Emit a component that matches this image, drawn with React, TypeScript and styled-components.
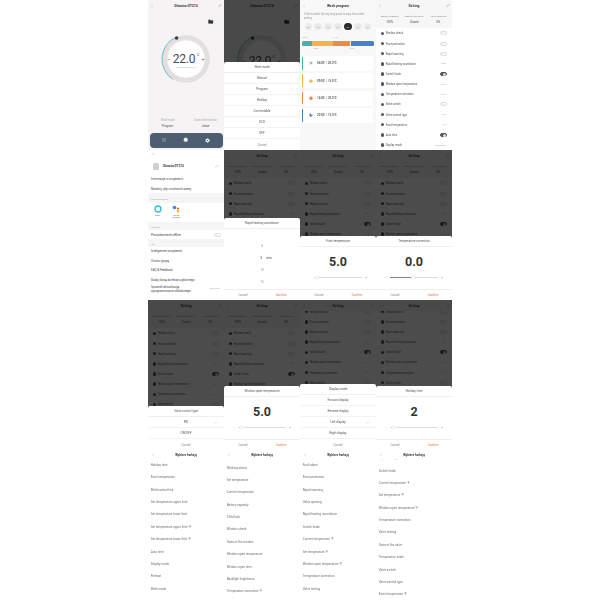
import React from 'react';
import styled, { createGlobalStyle } from 'styled-components';
import { ChevronLeft, ChevronRight, Pencil, Check, LayoutGrid, Clock, Moon, Sun, Coffee, Home, Folder } from 'lucide-react';

const Global = createGlobalStyle`
    * { box-sizing: border-box; }
    html, body { margin: 0; padding: 0; background: #fff; }
    body { font-family: "Roboto", "Liberation Sans", sans-serif; color: #3a3a3a; }
`;

const Board = styled.div`
    width: 304px;
    margin-left: 148px;
    display: grid;
    grid-template-columns: repeat(4, 76px);
    grid-auto-rows: 150px;
    filter: blur(0.5px);
`;

const Phone = styled.div<{ $bg?: string }>`
    width: 76px;
    height: 150px;
    overflow: hidden;
    display: flex;
    flex-direction: column;
    background: ${(p) => p.$bg || '#fff'};
    font-size: 3.2px;
`;

const Layer = styled.div`
    position: relative;
    width: 76px;
    height: 150px;
    overflow: hidden;
`;

const Header = styled.div`
    position: relative;
    z-index: 1;
    height: 11px;
    flex: none;
    display: grid;
    grid-template-columns: 4px 1fr 4px;
    align-items: center;
    text-align: center;
    padding: 0 2px;
    font-size: 3.4px;
    font-weight: 700;
    background: inherit;
`;

const Footer = styled.div`
    display: grid;
    grid-template-columns: 1fr 1fr;
    height: 11px;
    flex: none;
    align-items: center;
    text-align: center;
    border-top: 0.5px solid #eee;
    color: #888;
    font-size: 3px;
`;

const Confirm = styled.span`
    color: #e8693a;
`;

const Scrim = styled.div`
    position: absolute;
    z-index: 2;
    inset: 0;
    background: rgba(0, 0, 0, 0.7);
`;

const Sheet = styled.div<{ $h: number }>`
    position: absolute;
    z-index: 3;
    left: 0;
    right: 0;
    bottom: 0;
    height: ${(p) => p.$h}px;
    background: #fff;
    display: flex;
    flex-direction: column;
    border-radius: 2px 2px 0 0;
`;

const SheetTitle = styled.div`
    height: 11px;
    flex: none;
    display: flex;
    align-items: center;
    justify-content: center;
    font-size: 3px;
    color: #555;
    border-bottom: 0.5px solid #f0f0f0;
`;

const ChoiceRow = styled.div<{ $muted?: boolean }>`
    position: relative;
    height: 11px;
    flex: none;
    display: flex;
    align-items: center;
    justify-content: center;
    font-size: 3px;
    color: ${(p) => (p.$muted ? '#888' : '#555')};
    border-bottom: ${(p) => (p.$muted ? '0' : '0.5px solid #f3f3f3')};
`;

const Tick = styled.span`
    position: absolute;
    right: 6px;
    top: 3.5px;
    color: #e6a15a;
    line-height: 0;
`;

const SliderBody = styled.div`
    flex: 1;
    display: flex;
    flex-direction: column;
    align-items: center;
    justify-content: center;
    gap: 7.5px;
`;

const Big = styled.div`
    font-size: 12.5px;
    font-weight: 700;
    color: #333;
    line-height: 12px;
`;

const Track = styled.div`
    width: 58px;
    display: flex;
    align-items: center;
    gap: 3px;
    color: #999;
    font-size: 3px;
    line-height: 4px;
`;

const TrackLine = styled.div`
    position: relative;
    flex: 1;
    height: 0.7px;
    background: #ddd;
`;

const TrackFill = styled.div<{ $w: number }>`
    position: absolute;
    left: 0;
    top: -0.3px;
    height: 1.3px;
    width: ${(p) => p.$w}px;
    background: #5a8fc8;
`;

const Knob = styled.div<{ $x: number }>`
    position: absolute;
    left: ${(p) => p.$x}px;
    top: -1px;
    width: 3px;
    height: 3px;
    border-radius: 50%;
    background: #fff;
    box-shadow: 0 0 1px #aaa;
`;

const WheelBody = styled.div`
    flex: 1;
    display: flex;
    flex-direction: column;
    align-items: center;
    gap: 6px;
    font-size: 3px;
    color: #888;
    padding-top: 14px;
    overflow: hidden;
`;

const WheelRow = styled.div<{ $active?: boolean }>`
    height: 6px;
    flex: none;
    width: 100%;
    display: flex;
    align-items: center;
    justify-content: center;
    gap: 4.5px;
    padding-left: ${(p) => (p.$active ? 8 : 0)}px;
    color: ${(p) => (p.$active ? '#333' : '#999')};
`;

/* home screen */
const FolderSpot = styled.div`
    align-self: flex-end;
    margin: 8px 10.5px 0 0;
    height: 6px;
    color: #333;
    line-height: 0;
`;

const Dial = styled.div`
    margin: 9.3px 0 0 13px;
    width: 50px;
    height: 50px;
    position: relative;
    flex: none;
`;

const DialText = styled.div`
    position: absolute;
    inset: 0;
    padding-top: 2.5px;
    display: flex;
    flex-direction: column;
    align-items: center;
    justify-content: center;
`;

const DialValue = styled.div`
    display: flex;
    align-items: center;
    gap: 1px;
    font-size: 12px;
    font-weight: 400;
    letter-spacing: -0.2px;
    color: #3f4a55;
    line-height: 12px;
`;

const DialSign = styled.span`
    font-family: "Liberation Sans", sans-serif;
    font-size: 6px;
    color: #666;
    margin: 0 1px;
`;

const Degree = styled.span`
    font-size: 3.4px;
    align-self: flex-start;
    line-height: 5px;
`;

const DialNote = styled.div`
    font-size: 1.7px;
    color: #aaa;
    margin-top: 1px;
`;

const StateLine = styled.div`
    margin-top: auto;
    display: grid;
    grid-template-columns: 39px 1fr;
    text-align: center;
    font-size: 2.6px;
    color: #aaa;
`;

const StateValue = styled.div`
    margin-top: 2.2px;
    font-size: 3px;
    color: #555;
`;

const Dock = styled.div`
    margin: 5px 1.5px 2.3px;
    height: 15px;
    flex: none;
    border-radius: 4px;
    background: #4d5e72;
    display: flex;
    justify-content: space-around;
    align-items: center;
    color: #fff;
    padding: 0 4px;
`;

/* week program */
const Hint = styled.div`
    font-size: 2.6px;
    color: #999;
    line-height: 4px;
    padding: 1.7px 4px 0;
    white-space: nowrap;
`;

const DayLine = styled.div`
    display: flex;
    justify-content: space-between;
    padding: 2.3px 4.5px 0;
`;

const Day = styled.div<{ $on?: boolean }>`
    width: 7.5px;
    height: 7.5px;
    border-radius: 50%;
    background: ${(p) => (p.$on ? '#2a2a2a' : '#eceaea')};
    color: ${(p) => (p.$on ? '#fff' : '#aaa')};
    font-size: 1.9px;
    display: flex;
    align-items: center;
    justify-content: center;
`;

const BarNotes = styled.div<{ $top: number; $left: number; $gap: number }>`
    display: flex;
    gap: ${(p) => p.$gap}px;
    padding-left: ${(p) => p.$left}px;
    margin-top: ${(p) => p.$top}px;
    height: 3px;
    flex: none;
    font-size: 1.9px;
    line-height: 3px;
    color: #aaa;
`;

const DayBar = styled.div`
    margin: 1.2px 2.5px 0 2px;
    height: 5.5px;
    flex: none;
    display: flex;
    border-radius: 1.5px;
    overflow: hidden;
    gap: 0.4px;
`;

const DaySlot = styled.div<{ $grow: number; $c: string }>`
    flex: ${(p) => p.$grow};
    background: ${(p) => p.$c};
`;

const SlotList = styled.div`
    margin-top: 5.6px;
    display: flex;
    flex-direction: column;
    gap: 2.3px;
`;

const SlotCard = styled.div`
    height: 15px;
    flex: none;
    display: flex;
    align-items: center;
    background: #fff;
    margin-right: 3px;
    padding: 0 3px 0 2px;
    font-size: 2.9px;
    font-weight: 500;
    color: #444;
    white-space: pre;
`;

const SlotMark = styled.span<{ $c: string }>`
    width: 1px;
    height: 12.7px;
    background: ${(p) => p.$c};
`;

const SlotIcon = styled.span`
    margin: 0 3.7px 0 6.3px;
    line-height: 0;
`;

const SlotArrow = styled.span`
    margin-left: auto;
    line-height: 0;
`;

/* setting screen */
const Stats = styled.div`
    display: grid;
    grid-template-columns: repeat(3, 1fr);
    text-align: center;
    padding: 4.5px 1.5px 0;
    font-size: 2.5px;
    line-height: 2.9px;
    color: #888;
    height: 17.4px;
    flex: none;
    white-space: nowrap;
`;

const StatValue = styled.div`
    margin-top: 2.8px;
    font-size: 2.8px;
    color: #555;
`;

const SettingList = styled.div<{ $shift: number }>`
    display: flex;
    flex-direction: column;
    background: #fff;
    flex: 1;
    margin-top: ${(p) => p.$shift}px;
`;

const SettingRow = styled.div`
    height: 10.15px;
    flex: none;
    display: flex;
    align-items: center;
    padding: 0 5px 0 4.6px;
    font-size: 2.7px;
    color: #555;
`;

const Bullet = styled.span`
    width: 3.4px;
    height: 3.4px;
    margin-right: 1.7px;
    border-radius: 50%;
    background: #4c5763;
`;

const SettingValue = styled.span`
    margin-left: auto;
    font-size: 2.1px;
    color: #aaa;
`;

const Toggle = styled.span<{ $on?: boolean }>`
    margin-left: auto;
    width: 7.4px;
    height: 4px;
    border-radius: 2px;
    border: 0.5px solid ${(p) => (p.$on ? '#4c5763' : '#ddd')};
    background: ${(p) => (p.$on ? '#4c5763' : '#fff')};
    display: flex;
    justify-content: ${(p) => (p.$on ? 'flex-end' : 'flex-start')};
    &::after {
        content: '';
        width: 3px;
        height: 3px;
        border-radius: 50%;
        background: ${(p) => (p.$on ? '#ddd' : '#eee')};
    }
`;

/* device menu */
const TopBack = styled.div`
    height: 8px;
    flex: none;
    padding-left: 3px;
    display: flex;
    align-items: center;
`;

const DeviceHead = styled.div`
    height: 16.7px;
    display: flex;
    align-items: center;
    padding: 0 6px 0 5px;
    gap: 4px;
    font-size: 3px;
    font-weight: 700;
    flex: none;
`;

const Thumb = styled.span`
    width: 6px;
    height: 7px;
    background: #cfcfcf;
    border-radius: 2px 2px 1px 1px;
`;

const HeadEdit = styled.span`
    margin-left: auto;
    line-height: 0;
`;

const MenuRow = styled.div<{ $h?: number }>`
    height: ${(p) => p.$h || 9.35}px;
    flex: none;
    display: flex;
    align-items: center;
    justify-content: space-between;
    padding: 0 3px;
    font-size: 3px;
    color: #444;
    line-height: 4.2px;
`;

const MenuTag = styled.span`
    font-size: 2.1px;
    color: #aaa;
`;

const Band = styled.div<{ $h: number }>`
    height: ${(p) => p.$h}px;
    flex: none;
    background: #f5f5f5;
    color: #aaa;
    font-size: 1.9px;
    display: flex;
    align-items: center;
    padding: 1.5px 3px 0;
`;

const Assistants = styled.div`
    height: 19px;
    flex: none;
    display: flex;
    gap: 8.7px;
    padding: 1.5px 0 0 4.5px;
`;

const Assistant = styled.div`
    width: 10px;
    display: flex;
    flex-direction: column;
    align-items: center;
    font-size: 1.9px;
    color: #666;
    text-align: center;
    line-height: 2.4px;
    gap: 1.5px;
`;

/* feature list */
const FeatureRow = styled.div`
    height: 12.37px;
    flex: none;
    display: flex;
    align-items: center;
    justify-content: space-between;
    padding: 0 4px 0 2.7px;
    font-size: 3.05px;
    color: #707070;
`;

const FeatureList = styled.div<{ $shift: number }>`
    margin-top: ${(p) => p.$shift}px;
    display: flex;
    flex-direction: column;
`;

const ListHead = styled(Header)`
    height: 9px;
    font-size: 3px;
    padding: 0 3px;
`;

const Chevron = () => <ChevronRight size={3} strokeWidth={1.4} color="#bbb" />;

const Back = () => <ChevronLeft size={4} strokeWidth={1.6} color="#777" />;

const PROGRAM_SLOTS = [
    { c: '#3fb5ac', t: '06:00  |  20.0°C', icon: <Sun size={4} color="#3fb5ac" fill="#3fb5ac" /> },
    { c: '#f2b644', t: '09:00  |  15.0°C', icon: <Coffee size={4} color="#f2b644" fill="#f2b644" /> },
    { c: '#ef8a45', t: '14:00  |  22.0°C', icon: <Home size={4} color="#ef8a45" fill="#ef8a45" /> },
    { c: '#4a7fc0', t: '22:00  |  15.0°C', icon: <Moon size={4} color="#4a7fc0" fill="#4a7fc0" /> },
];

const SETTINGS: { name: string; value?: string; toggle?: 'on' | 'off' }[] = [
    { name: 'Window check', toggle: 'off' },
    { name: 'Frost protection', toggle: 'off' },
    { name: 'Rapid warming', toggle: 'off' },
    { name: 'Rapid heating countdown', value: '5min  ›' },
    { name: 'Switch Scale', toggle: 'on' },
    { name: 'Window open temperature', value: '5.0°C  ›' },
    { name: 'Temperature correction', value: '0.0°C  ›' },
    { name: 'Valve switch', toggle: 'off' },
    { name: 'Valve control type', value: 'PID  ›' },
    { name: 'Frost temperature', value: '5.0  ›' },
    { name: 'Auto time', toggle: 'on' },
    { name: 'Display mode', value: 'Left display  ›' },
];

const SettingScreen: React.FC<{ shift?: number; rows?: number }> = ({ shift = 0, rows = 12 }) => (
    <Phone $bg="#f6f6f6">
        <Header>
            <Back />
            Setting
            <Pencil size={3.5} strokeWidth={1.6} color="#777" />
        </Header>
        {shift === 0 && (
            <Stats>
                <div>Battery capacity<StatValue>100%</StatValue></div>
                <div>State of the valve<StatValue>Closed</StatValue></div>
                <div>Valve opening<StatValue>0%</StatValue></div>
            </Stats>
        )}
        <SettingList $shift={shift}>
            {SETTINGS.slice(0, rows).map((s) => (
                <SettingRow key={s.name}>
                    <Bullet />
                    {s.name}
                    {s.toggle && <Toggle $on={s.toggle === 'on'} />}
                    {s.value && <SettingValue>{s.value}</SettingValue>}
                </SettingRow>
            ))}
        </SettingList>
    </Phone>
);

const Overlay: React.FC<{ shift?: number; rows: number; children: React.ReactNode }> = ({ shift, rows, children }) => (
    <Layer>
        <SettingScreen shift={shift} rows={rows} />
        <Scrim />
        {children}
    </Layer>
);

const Actions = () => (
    <Footer>
        <span>Cancel</span>
        <Confirm>Confirm</Confirm>
    </Footer>
);

const SliderSheet: React.FC<{ title: string; value: string; fill?: number; knob: number }> = ({ title, value, fill, knob }) => (
    <Sheet $h={64}>
        <SheetTitle>{title}</SheetTitle>
        <SliderBody>
            <Big>{value}</Big>
            <Track>
                −
                <TrackLine>
                    {fill ? <TrackFill $w={fill} /> : null}
                    <Knob $x={knob} />
                </TrackLine>
                +
            </Track>
        </SliderBody>
        <Actions />
    </Sheet>
);

const ChoiceSheet: React.FC<{ title: string; items: string[]; picked: string; h: number }> = ({ title, items, picked, h }) => (
    <Sheet $h={h}>
        <SheetTitle>{title}</SheetTitle>
        {items.map((i) => (
            <ChoiceRow key={i}>
                {i}
                {i === picked && <Tick><Check size={4} strokeWidth={1.5} /></Tick>}
            </ChoiceRow>
        ))}
        <ChoiceRow $muted>Cancel</ChoiceRow>
    </Sheet>
);

const Dashboard: React.FC<{ covered?: boolean }> = ({ covered }) => (
    <Phone $bg="#f5f3f3">
        <Header>
            <Back />
            Głowica GT274
            <Pencil size={3.5} strokeWidth={1.6} color="#777" />
        </Header>
        <FolderSpot><Folder size={5.5} fill="#333" strokeWidth={1} /></FolderSpot>
        <Dial>
            <svg width="50" height="50" viewBox="0 0 50 50">
                <circle cx="25" cy="25" r="21.5" fill="none" stroke="#e2dfde" strokeWidth="4.6" />
                <circle cx="25" cy="25" r="19" fill="#fff" stroke="#eddfdb" strokeWidth="0.8" />
                <path d="M 15.6 2.8 A 24.3 24.3 0 0 0 12.3 45.7" fill="none" stroke="#45b4c4" strokeWidth="0.8" />
                <circle cx="15.6" cy="4" r="1.8" fill="#33414f" />
            </svg>
            <DialText>
                <DialValue><DialSign>−</DialSign>22.0<Degree>°C</Degree><DialSign>+</DialSign></DialValue>
                {!covered && <DialNote>Current temperature 21.0°C</DialNote>}
            </DialText>
        </Dial>
        {!covered && (
            <>
                <StateLine>
                    <div>Work mode<StateValue>Program</StateValue></div>
                    <div>State of the window<StateValue>close</StateValue></div>
                </StateLine>
                <Dock>
                    <LayoutGrid size={4} strokeWidth={1.5} color="#c3cad3" />
                    <Clock size={5.5} strokeWidth={2} fill="#fff" color="#4d5e72" />
                    <svg width="5" height="5" viewBox="0 0 10 10">
                        <circle cx="5" cy="5" r="3.4" fill="#fff" stroke="#fff" strokeWidth="2" strokeDasharray="2 1.4" />
                        <circle cx="5" cy="5" r="1.5" fill="#4d5e72" />
                    </svg>
                </Dock>
            </>
        )}
    </Phone>
);

const WeekProgram = () => (
    <Phone $bg="#f8f8f8">
        <Header>
            <Back />
            Week program
            <span />
        </Header>
        <Hint>Click to select the day, long press to copy the current<br />setting</Hint>
        <DayLine>
            {['Mon', 'Tues', 'Wed', 'Thur', 'Fri', 'Sat', 'Sun'].map((d) => (
                <Day key={d} $on={d === 'Fri'}>{d}</Day>
            ))}
        </DayLine>
        <BarNotes $top={6} $left={2.5} $gap={26}><span>06:00</span><span>14:00</span></BarNotes>
        <DayBar>
            <DaySlot $grow={10} $c="#3fb5ac" />
            <DaySlot $grow={21} $c="#f2b644" />
            <DaySlot $grow={17} $c="#ef8a45" />
            <DaySlot $grow={23} $c="#4a7fc0" />
        </DayBar>
        <BarNotes $top={1.2} $left={13.5} $gap={31}><span>09:00</span><span>22:00</span></BarNotes>
        <SlotList>
            {PROGRAM_SLOTS.map((s) => (
                <SlotCard key={s.t}>
                    <SlotMark $c={s.c} />
                    <SlotIcon>{s.icon}</SlotIcon>
                    {s.t}
                    <SlotArrow><Chevron /></SlotArrow>
                </SlotCard>
            ))}
        </SlotList>
    </Phone>
);

const DeviceMenu = () => (
    <Phone>
        <TopBack><Back /></TopBack>
        <DeviceHead>
            <Thumb />
            Głowica GT274
            <HeadEdit><Pencil size={3} color="#aaa" /></HeadEdit>
        </DeviceHead>
        <MenuRow>Informacje o urządzeniu<Chevron /></MenuRow>
        <MenuRow>Naciśnij, aby uruchomić sceny<Chevron /></MenuRow>
        <Band $h={9.7}>Sterowanie głosowe</Band>
        <Assistants>
            <Assistant>
                <svg width="8" height="8" viewBox="0 0 8 8"><circle cx="4" cy="4" r="3" fill="none" stroke="#3cb8e6" strokeWidth="1.4" /></svg>
                Alexa
            </Assistant>
            <Assistant>
                <svg width="8" height="8" viewBox="0 0 8 8">
                    <circle cx="2.5" cy="2.5" r="1.8" fill="#4285f4" />
                    <circle cx="6" cy="3.5" r="1" fill="#ea4335" />
                    <circle cx="6" cy="6.2" r="1.3" fill="#fbbc05" />
                </svg>
                Google Assistant
            </Assistant>
        </Assistants>
        <Band $h={8}>Tryb offline</Band>
        <MenuRow>Powiadomienie offline<Toggle /></MenuRow>
        <Band $h={7.5}>Inne</Band>
        <MenuRow>Inteligentne urządzenia<Chevron /></MenuRow>
        <MenuRow>Utwórz grupę<Chevron /></MenuRow>
        <MenuRow>FAQ & Feedback<Chevron /></MenuRow>
        <MenuRow>Dodaj ikonę do ekranu głównego<Chevron /></MenuRow>
        <MenuRow $h={9.6}>
            <span>Sprawdź aktualizację<br />oprogramowania układowego</span>
            <MenuTag>Brak nowej ›</MenuTag>
        </MenuRow>
    </Phone>
);

const FeatureScreen: React.FC<{ rows: string[]; shift: number }> = ({ rows, shift }) => (
    <Phone>
        <ListHead>
            <ChevronLeft size={3.5} strokeWidth={1.6} color="#777" />
            Wybierz funkcję
            <span />
        </ListHead>
        <FeatureList $shift={shift}>
            {rows.map((r) => (
                <FeatureRow key={r}>{r}<Chevron /></FeatureRow>
            ))}
        </FeatureList>
    </Phone>
);

const App: React.FC = () => (
    <>
        <Global />
        <Board>
            <Dashboard />
            <Layer>
                <Dashboard covered />
                <Scrim />
                <ChoiceSheet
                    h={88}
                    title="Work mode"
                    picked="Program"
                    items={['Manual', 'Program', 'Holiday', 'Comfortable', 'ECO', 'OFF']}
                />
            </Layer>
            <WeekProgram />
            <SettingScreen />

            <DeviceMenu />
            <Overlay rows={4}>
                <Sheet $h={82}>
                    <SheetTitle>Rapid heating countdown</SheetTitle>
                    <WheelBody>
                        <WheelRow>4</WheelRow>
                        <WheelRow $active><span>5</span><span>min</span></WheelRow>
                        <WheelRow>10</WheelRow>
                        <WheelRow>15</WheelRow>
                    </WheelBody>
                    <Actions />
                </Sheet>
            </Overlay>
            <Overlay rows={6}><SliderSheet title="Frost temperature" value="5.0" knob={2} /></Overlay>
            <Overlay rows={6}><SliderSheet title="Temperature correction" value="0.0" fill={21} knob={22} /></Overlay>

            <Overlay rows={8}>
                <ChoiceSheet h={44} title="Valve control type" picked="PID" items={['PID', 'ON/OFF']} />
            </Overlay>
            <Overlay rows={6}><SliderSheet title="Window open temperature" value="5.0" knob={2} /></Overlay>
            <Overlay shift={-4.4} rows={8}>
                <ChoiceSheet
                    h={66}
                    title="Display mode"
                    picked="Left display"
                    items={['Forward display', 'Reverse display', 'Left display', 'Right display']}
                />
            </Overlay>
            <Overlay shift={-4.4} rows={8}><SliderSheet title="Holiday time" value="2" knob={2} /></Overlay>

            <FeatureScreen
                shift={-0.2}
                rows={['Holiday time', 'Frost temperature', 'Multi-control link', 'Set temperature upper limit', 'Set temperature lower limit', 'Set temperature upper limit °F', 'Set temperature lower limit °F', 'Auto time', 'Display mode', 'Preheat', 'Work mode']}
            />
            <FeatureScreen
                shift={2.5}
                rows={['Working status', 'Set temperature', 'Current temperature', 'Battery capacity', 'Child lock', 'Window check', 'State of the window', 'Window open temperature', 'Window open time', 'Backlight brightness', 'Temperature correction °F']}
            />
            <FeatureScreen
                shift={-0.2}
                rows={['Fault alarm', 'Frost protection', 'Rapid warming', 'Valve opening', 'Rapid heating countdown', 'Switch Scale', 'Current temperature °F', 'Set temperature °F', 'Window open temperature °F', 'Temperature correction', 'Valve testing']}
            />
            <FeatureScreen
                shift={-6.9}
                rows={['Rapid heating countdown', 'Switch Scale', 'Current temperature °F', 'Set temperature °F', 'Window open temperature °F', 'Temperature correction', 'Valve testing', 'State of the valve', 'Temperature scale', 'Valve switch', 'Valve control type', 'Frost temperature °F']}
            />
        </Board>
    </>
);

export default App;
